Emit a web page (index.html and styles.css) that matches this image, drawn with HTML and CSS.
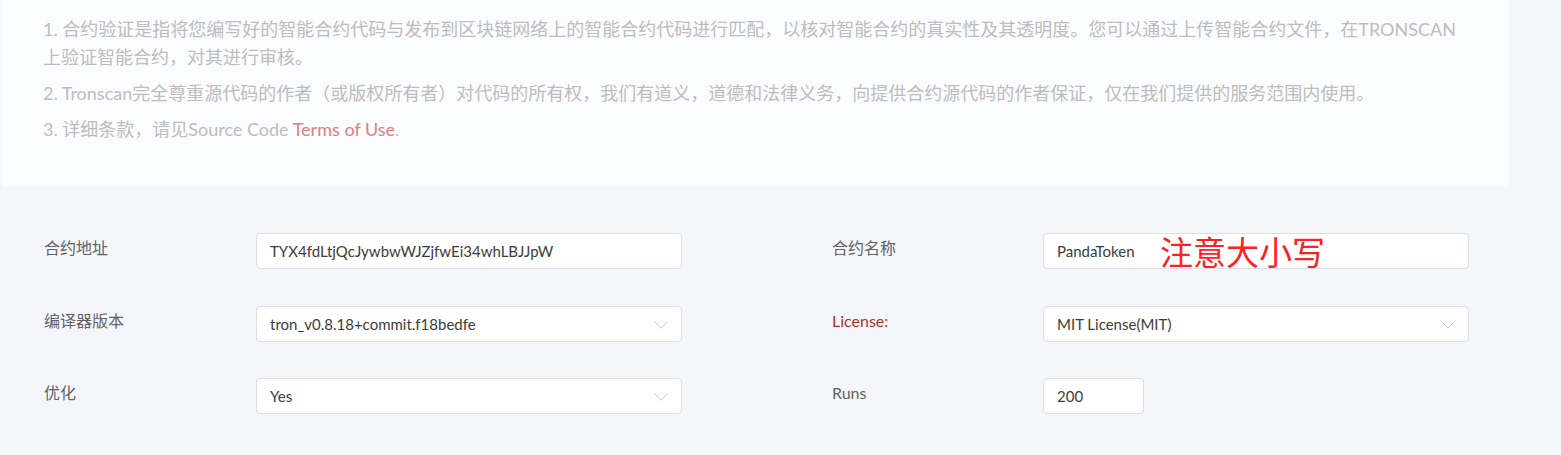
FILE: index.html
```html
<!DOCTYPE html>
<html lang="zh">
<head>
<meta charset="utf-8">
<title>合约验证</title>
<link rel="stylesheet" href="styles.css">
</head>
<body>
<div class="page">
  <section class="notice">
    <p>1. 合约验证是指将您编写好的智能合约代码与发布到区块链网络上的智能合约代码进行匹配，以核对智能合约的真实性及其透明度。您可以通过上传智能合约文件，在TRONSCAN上验证智能合约，对其进行审核。</p>
    <p>2. Tronscan完全尊重源代码的作者（或版权所有者）对代码的所有权，我们有道义，道德和法律义务，向提供合约源代码的作者保证，仅在我们提供的服务范围内使用。</p>
    <p>3. 详细条款，请见Source Code <a class="link" href="#">Terms of Use</a>.</p>
  </section>
  <form class="form">
    <div class="field">
      <label class="label">合约地址</label>
      <div class="control">TYX4fdLtjQcJywbwWJZjfwEi34whLBJJpW</div>
    </div>
    <div class="field">
      <label class="label">合约名称</label>
      <div class="control annotated">PandaToken<span class="note">注意大小写</span></div>
    </div>
    <div class="field">
      <label class="label">编译器版本</label>
      <div class="control select">tron_v0.8.18+commit.f18bedfe<svg class="arrow" width="14" height="8" viewBox="0 0 14 8"><path d="M0.5 0.5 L7 7.2 L13.5 0.5" fill="none" stroke="#c0c4cc" stroke-width="1"/></svg></div>
    </div>
    <div class="field">
      <label class="label required">License:</label>
      <div class="control select">MIT License(MIT)<svg class="arrow" width="14" height="8" viewBox="0 0 14 8"><path d="M0.5 0.5 L7 7.2 L13.5 0.5" fill="none" stroke="#c0c4cc" stroke-width="1"/></svg></div>
    </div>
    <div class="field">
      <label class="label">优化</label>
      <div class="control select">Yes<svg class="arrow" width="14" height="8" viewBox="0 0 14 8"><path d="M0.5 0.5 L7 7.2 L13.5 0.5" fill="none" stroke="#c0c4cc" stroke-width="1"/></svg></div>
    </div>
    <div class="field">
      <label class="label">Runs</label>
      <div class="control small">200</div>
    </div>
  </form>
</div>
</body>
</html>
```
FILE: styles.css
```css
html, body {
  margin: 0;
  padding: 0;
  background: #f5f6fa;
}
body {
  font-family: Lato, "Noto Sans CJK SC", sans-serif;
}
.page {
  padding-left: 2px;
}
.notice {
  width: 1507px;
  box-sizing: border-box;
  background: #fbfcfe;
  padding: 15px 40px 44px 41px;
}
.notice p {
  margin: 0 0 8px 0;
  font-size: 18px;
  line-height: 28px;
  color: #bdbdbd;
}
.notice p:last-child {
  margin-bottom: 0;
}
.link {
  color: #e07f7f;
  text-decoration: none;
}
.form {
  display: grid;
  grid-template-columns: 787px 638px;
  row-gap: 36.5px;
  padding: 46px 0 0 42px;
}
.field {
  display: flex;
  align-items: flex-start;
}
.label {
  width: 212px;
  flex: none;
  font-size: 16px;
  line-height: 30px;
  color: #606266;
}
.field:nth-child(even) .label {
  padding-left: 1px;
  width: 211px;
}
.label.required {
  color: #b4312b;
}
.control {
  position: relative;
  width: 426px;
  height: 36px;
  box-sizing: border-box;
  border: 1px solid #dcdfe6;
  border-radius: 4px;
  background: #fff;
  padding: 0 13px;
  font-size: 15px;
  line-height: 36px;
  color: #3c3c3c;
  display: flex;
  align-items: center;
}
.control.small {
  width: 101px;
}
.select .arrow {
  position: absolute;
  right: 13px;
  top: 14px;
}
.note {
  position: absolute;
  left: 116px;
  top: -3px;
  font-family: "Noto Sans CJK SC", sans-serif;
  font-size: 33px;
  line-height: 40px;
  color: #ff2121;
}
```
